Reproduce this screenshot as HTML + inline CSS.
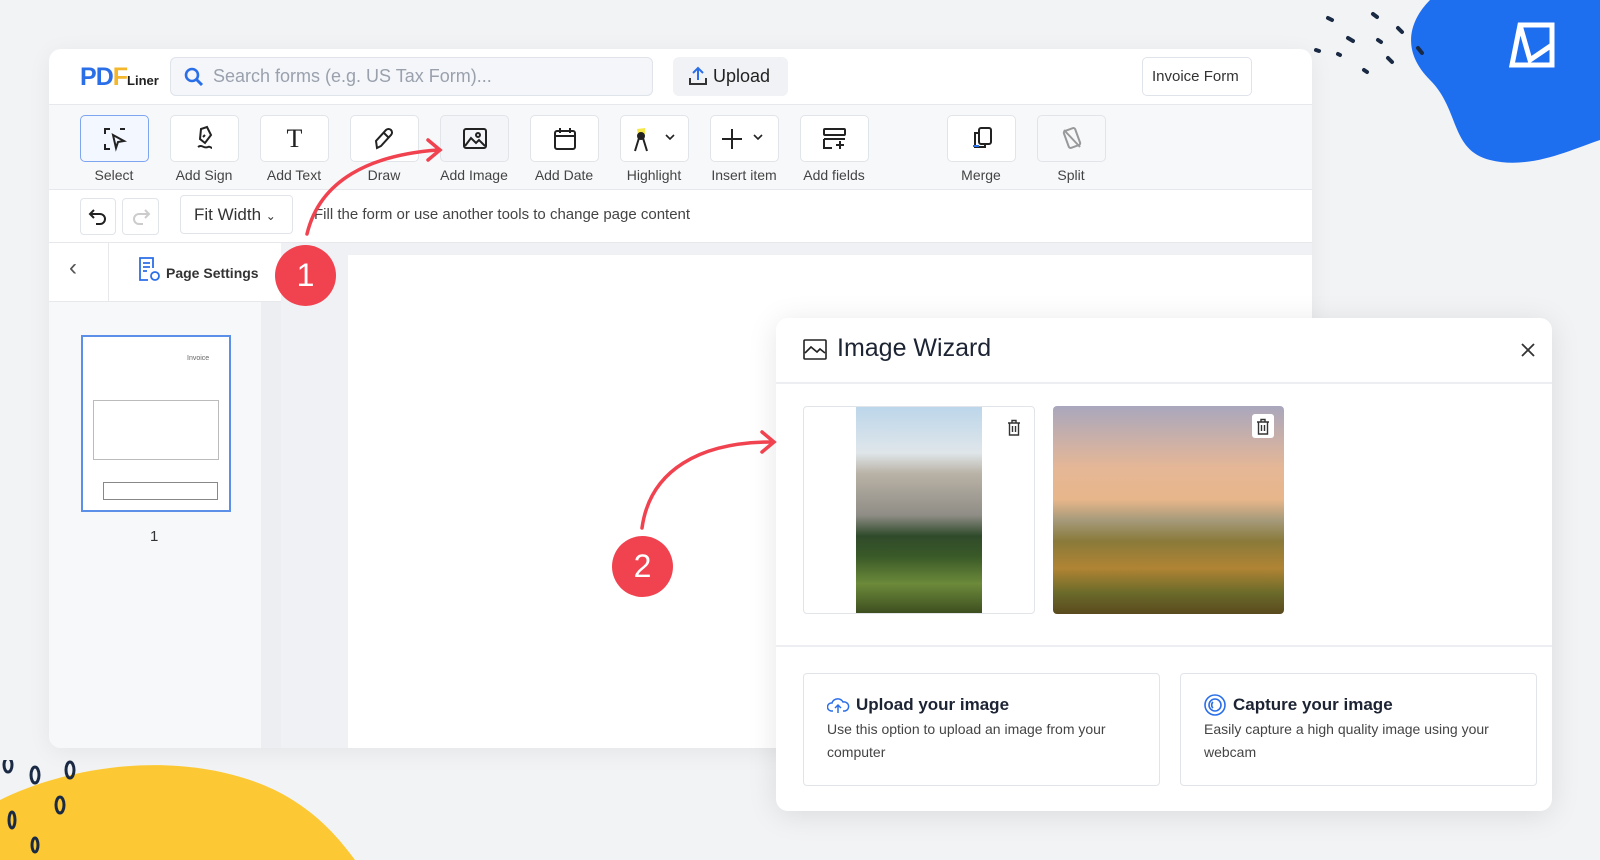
<!DOCTYPE html>
<html><head><meta charset="utf-8"><style>
*{box-sizing:border-box;margin:0;padding:0}
body{width:1600px;height:860px;overflow:hidden;background:#f2f3f5;font-family:"Liberation Sans",sans-serif;position:relative;color:#333}
.abs{position:absolute}
.app{left:49px;top:49px;width:1263px;height:699px;background:#fff;border-radius:12px;box-shadow:0 4px 24px rgba(0,0,0,.06);overflow:hidden}
.tb{top:55px;height:86px;left:0;right:0;background:#f7f8fa;border-top:1px solid #e6e8ec;border-bottom:1px solid #e6e8ec}
.btn{width:69px;height:47px;background:#fff;border:1px solid #e1e4e8;border-radius:5px;top:10px;display:flex;align-items:center;justify-content:center}
.lbl{top:62px;width:90px;text-align:center;font-size:14px;color:#444}
.card{border:1px solid #e1e4e8;border-radius:4px;background:#fff}
.trash{left:199px;top:8px;width:22px;height:24px;background:#fff;border-radius:3px;display:flex;align-items:center;justify-content:center}
</style></head><body>
<svg class="abs" style="left:1280px;top:0" width="320" height="170"><path d="M150 0 L320 0 L320 140 C290 150 250 170 210 160 C170 150 180 110 150 80 C120 50 130 20 150 0Z" fill="#1e6ef0"/>
<g stroke="#1a2a44" stroke-width="4" stroke-linecap="round"><path d="M48 18 l4 2"/><path d="M68 38 l5 3"/><path d="M36 50 l3 1"/><path d="M93 14 l4 3"/><path d="M108 58 l4 4"/><path d="M84 70 l3 2"/><path d="M58 54 l2 1"/><path d="M118 28 l4 4"/><path d="M138 48 l4 5"/><path d="M98 40 l3 2"/></g>
<path d="M240 25 h32 v40 h-40 z M240 25 L250 60 L272 45" fill="none" stroke="#fff" stroke-width="5"/></svg>
<svg class="abs" style="left:0;top:760px" width="360" height="100"><path d="M0 40 C60 10 160 -10 250 20 C310 40 340 80 355 100 L0 100Z" fill="#fcc934"/>
<g fill="none" stroke="#1a2a44" stroke-width="3"><ellipse cx="8" cy="5" rx="4" ry="7"/><ellipse cx="35" cy="15" rx="4" ry="8"/><ellipse cx="70" cy="10" rx="4" ry="8"/><ellipse cx="60" cy="45" rx="4" ry="8"/><ellipse cx="12" cy="60" rx="3" ry="8"/><ellipse cx="35" cy="85" rx="3" ry="7"/></g></svg>

<div class="abs app">
 <div class="abs" style="left:31px;top:14px;font-size:25px;font-weight:bold;letter-spacing:-1px"><span style="color:#2b6fe8">P</span><span style="color:#2b6fe8">D</span><span style="color:#f4b62b">F</span><span style="font-size:13px;color:#222;letter-spacing:0">Liner</span></div>
 <div class="abs" style="left:121px;top:8px;width:483px;height:39px;background:#f4f6fa;border:1px solid #dfe3ea;border-radius:6px;font-size:18px;color:#9aa1ad;padding:8px 0 0 42px">Search forms (e.g. US Tax Form)...
  <svg class="abs" style="left:13px;top:9px" width="20" height="20"><circle cx="8" cy="8" r="6" fill="none" stroke="#2b6fe8" stroke-width="2.6"/><path d="M12.5 12.5 L18 18" stroke="#2b6fe8" stroke-width="3"/></svg></div>
 <div class="abs" style="left:624px;top:8px;width:115px;height:39px;background:#f0f2f5;border-radius:6px;font-size:18px;color:#222;padding:9px 0 0 40px">Upload
  <svg class="abs" style="left:15px;top:8px" width="20" height="22"><path d="M10 15 V3 M5 8 L10 3 L15 8" fill="none" stroke="#2b6fe8" stroke-width="2"/><path d="M2 13 V19 H18 V13" fill="none" stroke="#333" stroke-width="2"/></svg></div>
 <div class="abs" style="left:1093px;top:8px;width:110px;height:39px;border:1px solid #dfe3ea;border-radius:5px;font-size:15px;color:#333;padding:10px 0 0 9px">Invoice Form</div>
 <div class="abs tb">
  <div class="abs btn" style="left:31px;border-color:#7ea6f0;background:#f3f7ff"><svg width="26" height="26" fill="none" stroke="#222" stroke-width="2"><path d="M3 8V3h5M3 18v5h5M18 3h5"/><path d="M11 9 L22 15 L16 16 L14 22 Z"/></svg></div>
  <div class="abs btn" style="left:121px"><svg width="26" height="28" fill="none" stroke="#222" stroke-width="2"><path d="M9 4 L15 2 L19 10 L13 18 L8 14 Z M11 12 l2 -2"/><path d="M6 22 c4 -3 6 2 10 0 c2 -1 3 1 4 1"/></svg></div>
  <div class="abs btn" style="left:211px"><span style="font-size:26px;font-family:'Liberation Serif',serif;color:#222">T</span></div>
  <div class="abs btn" style="left:301px"><svg width="26" height="26" fill="none" stroke="#222" stroke-width="2"><path d="M5 22 L4 15 L14 4 a3 3 0 0 1 5 5 L9 20 Z M12 7 l5 5"/></svg></div>
  <div class="abs btn" style="left:391px;background:#f3f5f8"><svg width="26" height="26" fill="none" stroke="#222" stroke-width="2"><rect x="2" y="3" width="22" height="19" rx="2"/><path d="M3 20 L9 12 L14 17 L17 14 L23 20"/><circle cx="16" cy="9" r="2"/></svg></div>
  <div class="abs btn" style="left:481px"><svg width="26" height="26" fill="none" stroke="#222" stroke-width="2"><rect x="3" y="5" width="20" height="18" rx="2"/><path d="M3 10h20M8 2v5M18 2v5"/></svg></div>
  <div class="abs btn" style="left:571px"><svg width="50" height="28" fill="none" stroke="#222" stroke-width="2"><path d="M7 4 L15 3 L15 9 L8 10 Z" fill="#f6e84a" stroke="none"/><circle cx="11" cy="11" r="3" fill="#222"/><path d="M5 26 L9 13 M17 26 L13 13"/><path d="M36 10 l4 4 l4 -4" stroke-width="1.6"/></svg></div>
  <div class="abs btn" style="left:661px"><svg width="50" height="28" fill="none" stroke="#222" stroke-width="2"><path d="M12 4v20M2 14h20"/><path d="M34 10 l4 4 l4 -4" stroke-width="1.6"/></svg></div>
  <div class="abs btn" style="left:751px"><svg width="26" height="26" fill="none" stroke="#222" stroke-width="2"><rect x="2" y="3" width="21" height="6" rx="1"/><path d="M2 13h21M2 13v9h8M18 15v8M14 19h8"/></svg></div>
  <div class="abs btn" style="left:898px"><svg width="26" height="28" fill="none" stroke="#222" stroke-width="2"><rect x="10" y="3" width="12" height="16" rx="2"/><path d="M9 8 H6 v14 h10 v-3"/><path d="M4 21 h6" stroke="#2b6fe8"/></svg></div>
  <div class="abs btn" style="left:988px;background:#f7f8fa"><svg width="26" height="28" fill="none" stroke="#999" stroke-width="2"><rect x="7" y="4" width="12" height="18" rx="2" transform="rotate(-20 13 13)"/><path d="M5 5 L21 22"/></svg></div>
  <div class="abs lbl" style="left:20px">Select</div><div class="abs lbl" style="left:110px">Add Sign</div><div class="abs lbl" style="left:200px">Add Text</div><div class="abs lbl" style="left:290px">Draw</div><div class="abs lbl" style="left:380px">Add Image</div><div class="abs lbl" style="left:470px">Add Date</div><div class="abs lbl" style="left:560px">Highlight</div><div class="abs lbl" style="left:650px">Insert item</div><div class="abs lbl" style="left:740px">Add fields</div><div class="abs lbl" style="left:887px">Merge</div><div class="abs lbl" style="left:977px">Split</div>
 </div>
 <div class="abs card" style="left:31px;top:149px;width:36px;height:37px;text-align:center;padding-top:7px"><svg width="20" height="20" fill="none" stroke="#222" stroke-width="2"><path d="M6 4 L2 8 L6 12 M2 8 H12 a5 5 0 0 1 0 10 H8"/></svg></div>
 <div class="abs card" style="left:73px;top:149px;width:37px;height:37px;text-align:center;padding-top:7px"><svg width="20" height="20" fill="none" stroke="#ccc" stroke-width="2"><path d="M14 4 L18 8 L14 12 M18 8 H8 a5 5 0 0 0 0 10 H12"/></svg></div>
 <div class="abs card" style="left:131px;top:146px;width:113px;height:39px;font-size:17px;color:#333;padding:9px 0 0 13px">Fit Width <span style="font-size:12px">&#8964;</span></div>
 <div class="abs" style="left:265px;top:157px;font-size:15px;color:#444">Fill the form or use another tools to change page content</div>
 <div class="abs" style="left:0;top:193px;right:0;height:1px;background:#e6e8ec"></div>
 <div class="abs" style="left:0;top:194px;width:232px;height:505px;background:#f7f8fa"></div>
 <div class="abs" style="left:0;top:194px;width:232px;height:59px;background:#fff;border-bottom:1px solid #e6e8ec"></div>
 <div class="abs" style="left:59px;top:194px;width:1px;height:59px;background:#e6e8ec"></div>
 <div class="abs" style="left:20px;top:205px;font-size:24px;color:#555">&#8249;</div>
 <svg class="abs" style="left:88px;top:207px" width="26" height="28" fill="none" stroke="#2b6fe8" stroke-width="1.8"><path d="M16 12 V2 H3 v22 h8 M6 7h7M6 11h7M6 15h4"/><circle cx="18" cy="20" r="4"/></svg>
 <div class="abs" style="left:117px;top:216px;font-size:14px;font-weight:bold;color:#333">Page Settings</div>
 <div class="abs" style="left:212px;top:253px;width:20px;height:446px;background:#eceef1"></div>
 <div class="abs" style="left:232px;top:194px;width:1031px;height:505px;background:#f0f1f4"></div>
 <div class="abs" style="left:299px;top:206px;width:964px;height:500px;background:#fff"></div>
 <div class="abs" style="left:32px;top:286px;width:150px;height:177px;border:2px solid #5b8fe8;background:#fff">
  <div class="abs" style="left:104px;top:18px;font-size:7px;color:#666">Invoice</div>
  <div class="abs" style="left:10px;top:63px;width:126px;height:60px;border:1px solid #bbb"></div>
  <div class="abs" style="left:20px;top:145px;width:115px;height:18px;border:1px solid #888"></div>
 </div>
 <div class="abs" style="left:101px;top:479px;font-size:15px;color:#333">1</div>
</div>

<div class="abs" style="left:776px;top:318px;width:776px;height:493px;background:#fff;border-radius:12px;box-shadow:0 4px 30px rgba(0,0,0,.1)">
 <svg class="abs" style="left:27px;top:21px" width="24" height="22" fill="none" stroke="#222" stroke-width="1.6"><rect x="1" y="1" width="22" height="19" rx="1"/><path d="M2 14 L8 8 L14 13 L17 10 L22 14"/></svg>
 <div class="abs" style="left:61px;top:16px;font-size:25px;color:#1c2333">Image Wizard</div>
 <svg class="abs" style="left:744px;top:24px" width="16" height="16" stroke="#333" stroke-width="1.8"><path d="M2 2 L14 14 M14 2 L2 14"/></svg>
 <div class="abs" style="left:0;top:64px;right:0;height:2px;background:#eceef1"></div>
 <div class="abs card" style="left:27px;top:88px;width:232px;height:208px;overflow:hidden">
  <div class="abs" style="left:52px;top:0;width:126px;height:208px;background:linear-gradient(#bcd6ea 0%,#dfe6ea 22%,#b9b2a6 32%,#8f8d86 52%,#2f4a2a 62%,#3a5a28 72%,#6c8a3a 85%,#3a4a1e 100%)"></div>
  <div class="abs trash"><svg width="14" height="17" fill="none" stroke="#333" stroke-width="1.4"><path d="M1 4h12M5 4V1.5h4V4M2.5 4v12h9V4M5.5 7v6M8.5 7v6"/></svg></div>
 </div>
 <div class="abs" style="left:277px;top:88px;width:231px;height:208px;border-radius:4px;overflow:hidden;background:linear-gradient(#a9a7bd 0%,#e6b796 30%,#e7b68a 45%,#a59a7a 55%,#8a7a3a 65%,#b08434 78%,#6a6a2a 90%,#5a4a1e 100%)">
  <div class="abs trash"><svg width="14" height="17" fill="none" stroke="#333" stroke-width="1.4"><path d="M1 4h12M5 4V1.5h4V4M2.5 4v12h9V4M5.5 7v6M8.5 7v6"/></svg></div>
 </div>
 <div class="abs" style="left:0;top:327px;right:0;height:2px;background:#eceef1"></div>
 <div class="abs card" style="left:27px;top:355px;width:357px;height:113px;padding:21px 0 0 23px">
  <div style="font-size:17px;font-weight:bold;color:#1c2333;padding-left:29px;position:relative"><svg class="abs" style="left:0;top:0" width="24" height="20" fill="none" stroke="#2b6fe8" stroke-width="1.5"><path d="M6 16 H4 a4 4 0 0 1 1 -8 a6 6 0 0 1 11 -1 a4.5 4.5 0 0 1 2 9 h-2 M11 18 V10 M8 13 l3 -3 l3 3"/></svg>Upload your image</div>
  <div style="font-size:14px;color:#444;line-height:23px;margin-top:3px;width:310px">Use this option to upload an image from your computer</div>
 </div>
 <div class="abs card" style="left:404px;top:355px;width:357px;height:113px;padding:21px 0 0 23px">
  <div style="font-size:17px;font-weight:bold;color:#1c2333;padding-left:29px;position:relative"><svg class="abs" style="left:0;top:-1px" width="24" height="24" fill="none" stroke="#2b6fe8" stroke-width="1.6"><circle cx="11" cy="11" r="10"/><circle cx="11" cy="11" r="6"/><path d="M9 8 a4 4 0 0 0 0 6"/></svg>Capture your image</div>
  <div style="font-size:14px;color:#444;line-height:23px;margin-top:3px;width:310px">Easily capture a high quality image using your webcam</div>
 </div>
</div>

<svg class="abs" style="left:0;top:0" width="1600" height="860" fill="none" stroke="#f0424f" stroke-width="3.5" stroke-linecap="round">
 <path d="M307 234 C320 180 370 155 438 150"/><path d="M428 140 L440 150 L428 160"/>
 <path d="M642 528 C650 470 700 442 772 442"/><path d="M762 432 L774 442 L762 452"/>
</svg>
<div class="abs" style="left:275px;top:245px;width:61px;height:61px;border-radius:50%;background:#f0424f;color:#fff;font-size:32px;text-align:center;line-height:61px">1</div>
<div class="abs" style="left:612px;top:536px;width:61px;height:61px;border-radius:50%;background:#f0424f;color:#fff;font-size:32px;text-align:center;line-height:61px">2</div>
</body></html>
